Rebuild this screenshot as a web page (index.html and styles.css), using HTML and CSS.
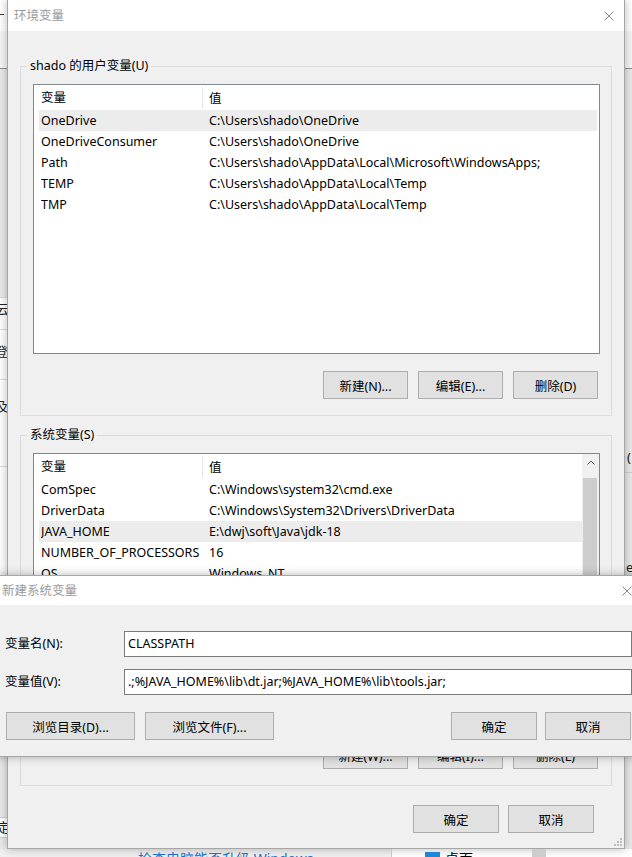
FILE: index.html
```html
<!DOCTYPE html>
<html lang="zh-CN">
<head>
<meta charset="utf-8">
<title>环境变量</title>
<link rel="stylesheet" href="styles.css">
</head>
<body>
<div class="desk">
  <div class="d-top"><span class="d-dash"></span></div>
  <div class="d-band"></div>
  <div class="d-left-white">
    <span class="d-ch c-yun">云</span>
    <span class="d-ch c-deng">登</span>
    <span class="d-ch c-ji">及</span>
    <span class="d-line l1"></span>
    <span class="d-line l2"></span>
    <span class="d-line l3"></span>
  </div>
  <div class="d-right">
    <span class="d-ch r-par">(</span>
    <span class="d-line r1"></span>
    <span class="d-ch r-e">e</span>
  </div>
  <div class="d-left-low"><span class="d-ch c-ding">定</span></div>
  <div class="d-bottom">
    <span class="d-link">检查电脑能否升级 Windows</span>
    <span class="d-tick t1"></span>
    <span class="d-tick t2"></span>
    <span class="d-icon"></span>
    <span class="d-desk">桌面</span>
    <span class="d-sb"></span>
  </div>
</div>

<div class="win main">
  <div class="titlebar">
    <span class="title">环境变量</span>
    <svg class="close" width="10" height="10" viewBox="0 0 10 10"><path d="M0.5 0.5L9.5 9.5M9.5 0.5L0.5 9.5" stroke="#8a8a8a" stroke-width="1" fill="none"/></svg>
  </div>
  <div class="mbody">
    <fieldset class="group">
      <legend>shado 的用户变量(U)</legend>
      <div class="list">
        <div class="lmain">
          <div class="lhead"><span class="c1">变量</span><span class="c2">值</span></div>
          <div class="row sel"><span class="c1">OneDrive</span><span class="c2">C:\Users\shado\OneDrive</span></div>
          <div class="row"><span class="c1">OneDriveConsumer</span><span class="c2">C:\Users\shado\OneDrive</span></div>
          <div class="row"><span class="c1">Path</span><span class="c2">C:\Users\shado\AppData\Local\Microsoft\WindowsApps;</span></div>
          <div class="row"><span class="c1">TEMP</span><span class="c2">C:\Users\shado\AppData\Local\Temp</span></div>
          <div class="row"><span class="c1">TMP</span><span class="c2">C:\Users\shado\AppData\Local\Temp</span></div>
        </div>
      </div>
      <div class="btns">
        <button>新建(N)...</button>
        <button>编辑(E)...</button>
        <button>删除(D)</button>
      </div>
    </fieldset>

    <fieldset class="group g2">
      <legend>系统变量(S)</legend>
      <div class="list list2">
        <div class="lmain">
          <div class="lhead"><span class="c1">变量</span><span class="c2">值</span></div>
          <div class="row"><span class="c1">ComSpec</span><span class="c2">C:\Windows\system32\cmd.exe</span></div>
          <div class="row"><span class="c1">DriverData</span><span class="c2">C:\Windows\System32\Drivers\DriverData</span></div>
          <div class="row sel"><span class="c1">JAVA_HOME</span><span class="c2">E:\dwj\soft\Java\jdk-18</span></div>
          <div class="row"><span class="c1">NUMBER_OF_PROCESSORS</span><span class="c2">16</span></div>
          <div class="row"><span class="c1">OS</span><span class="c2">Windows_NT</span></div>
        </div>
        <div class="vscroll">
          <div class="vs-up"><svg width="8" height="5" viewBox="0 0 8 5"><path d="M0.5 4.5L4 1L7.5 4.5" stroke="#606060" fill="none" stroke-width="1"/></svg></div>
          <div class="vs-thumb"></div>
        </div>
      </div>
      <div class="btns">
        <button>新建(W)...</button>
        <button>编辑(I)...</button>
        <button>删除(L)</button>
      </div>
    </fieldset>

    <div class="btns mbtns">
      <button>确定</button>
      <button>取消</button>
    </div>
  </div>
  <svg class="grip" width="8" height="8" viewBox="0 0 8 8">
    <rect x="6" y="0" width="2" height="2" fill="#bdbdbd"/>
    <rect x="3" y="3" width="2" height="2" fill="#bdbdbd"/>
    <rect x="6" y="3" width="2" height="2" fill="#bdbdbd"/>
    <rect x="0" y="6" width="2" height="2" fill="#bdbdbd"/>
    <rect x="3" y="6" width="2" height="2" fill="#bdbdbd"/>
    <rect x="6" y="6" width="2" height="2" fill="#bdbdbd"/>
  </svg>
</div>

<div class="win dlg">
  <div class="titlebar dtitle">
    <span class="title">新建系统变量</span>
    <svg class="close" width="10" height="10" viewBox="0 0 10 10"><path d="M0.5 0.5L9.5 9.5M9.5 0.5L0.5 9.5" stroke="#8a8a8a" stroke-width="1" fill="none"/></svg>
  </div>
  <div class="dbody">
    <div class="frow"><span class="flabel">变量名(N):</span><div class="finput">CLASSPATH</div></div>
    <div class="frow"><span class="flabel">变量值(V):</span><div class="finput">.;%JAVA_HOME%\lib\dt.jar;%JAVA_HOME%\lib\tools.jar;</div></div>
    <div class="dbtns">
      <div class="dleft">
        <button class="wide">浏览目录(D)...</button>
        <button class="wide">浏览文件(F)...</button>
      </div>
      <div class="dright">
        <button>确定</button>
        <button>取消</button>
      </div>
    </div>
  </div>
</div>
</body>
</html>
```

FILE: styles.css
```css
* { box-sizing: border-box; }
html, body { margin: 0; padding: 0; }
body {
  width: 632px;
  height: 857px;
  overflow: hidden;
  position: relative;
  background: #e9e9e9;
  font-family: "Noto Sans", "Noto Sans CJK SC", sans-serif;
  font-size: 12.5px;
  color: #000;
}

/* ---------- background window pieces ---------- */
.desk { position: absolute; inset: 0; }
.d-top { position: absolute; left: 0; top: 0; width: 632px; height: 31px; background: #fff; }
.d-dash { position: absolute; left: 0; top: 14px; width: 4px; height: 1px; background: #333; }
.d-band { position: absolute; left: 0; top: 31px; width: 632px; height: 38px; background: #f6f6f6; border-bottom: 1px solid #8d8d8d; }
.d-left-white { position: absolute; left: 0; top: 297px; width: 8px; height: 278px; background: #fff; border-top: 1px solid #d6d6d6; }
.d-ch { position: absolute; font-size: 13px; line-height: 16px; color: #222; }
.c-yun { left: -4px; top: 3px; }
.c-deng { left: -5px; top: 45px; }
.c-ji { left: -5px; top: 100px; }
.d-line { position: absolute; left: 0; width: 8px; height: 1px; background: #d9d9d9; }
.l1 { top: 31px; }
.l2 { top: 81px; }
.l3 { top: 168px; }
.d-right { position: absolute; left: 625px; top: 440px; width: 7px; height: 135px; }
.r-par { left: 2px; top: 9px; }
.r1 { top: 32px; background: #cfcfcf; }
.r-e { left: 1px; top: 119px; }
.d-left-low { position: absolute; left: 0; top: 817px; width: 8px; height: 21px; background: #fff; border-top: 1px solid #cfcfcf; border-bottom: 1px solid #cfcfcf; }
.c-ding { left: -3px; top: 1px; }
.d-bottom { position: absolute; left: 0; top: 849px; width: 632px; height: 8px; background: #f0f0f0; overflow: hidden; }
.d-bottom::after { content: ""; position: absolute; left: 391px; top: 0; width: 241px; height: 8px; background: #fff; }
.d-link { position: absolute; left: 138px; top: 1px; font-size: 14px; line-height: 18px; color: #1a6fc9; z-index: 1; }
.d-tick { position: absolute; top: 0; width: 1px; height: 8px; background: #c8c8c8; z-index: 1; }
.t1 { left: 240px; }
.t2 { left: 391px; }
.d-icon { position: absolute; left: 425px; top: 3px; width: 15px; height: 12px; background: #1e87d8; z-index: 1; }
.d-desk { position: absolute; left: 445px; top: 1px; font-size: 14px; line-height: 18px; z-index: 1; }
.d-sb { position: absolute; left: 532px; top: 0; width: 14px; height: 8px; background: #cdcdcd; z-index: 1; }

/* ---------- windows ---------- */
.win {
  position: absolute;
  background: #f0f0f0;
  border: 1px solid #a6a6a6;
  box-shadow: 0 0 9px rgba(0, 0, 0, 0.28);
  display: flex;
  flex-direction: column;
}
.main { left: 7px; top: -1px; width: 618px; height: 850px; }
.titlebar {
  flex: none;
  height: 31px;
  background: #fff;
  display: flex;
  align-items: center;
  justify-content: space-between;
  padding: 0 10px 0 6px;
}
.title { color: #9a9a9a; line-height: 16px; }
.close { display: block; }

.mbody {
  flex: 1;
  display: flex;
  flex-direction: column;
  padding: 26px 12px 0 12px;
}
.group {
  margin: 0;
  min-width: 0;
  border: 1px solid #dcdcdc;
  padding: 9px 11px 16px 12px;
}
.group legend {
  padding: 0 3px;
  margin-left: -6px;
  line-height: 18px;
}
.g2 { margin-top: 10px; }

.list {
  background: #fff;
  border: 1px solid #828790;
  height: 270px;
  display: flex;
  overflow: hidden;
}
.list2 { height: 271px; }
.lmain { flex: 1; min-width: 0; padding-right: 2px; }
.list2 .lmain { padding-right: 0; }
.lhead {
  display: flex;
  height: 25px;
  align-items: center;
}
.lhead .c1 {
  width: 169px;
  padding-left: 7px;
  height: 22px;
  line-height: 22px;
  border-right: 1px solid #e5e5e5;
}
.lhead .c2 { padding-left: 6px; }
.row {
  display: flex;
  align-items: center;
  height: 21px;
  margin-left: 5px;
  padding-left: 2px;
  white-space: nowrap;
}
.row .c1 { width: 162px; flex: none; overflow: hidden; }
.row .c2 { padding-left: 6px; }
.sel { background: #ececec; }

.vscroll {
  flex: none;
  width: 17px;
  background: #f0f0f0;
  display: flex;
  flex-direction: column;
}
.vs-up { height: 24px; display: flex; align-items: center; justify-content: center; padding-bottom: 8px; }
.vs-up svg { display: block; }
.vs-thumb { flex: 1; margin: 0 2px 0 1px; background: #cdcdcd; }

.btns {
  display: flex;
  justify-content: flex-end;
  gap: 10px;
  margin-top: 17px;
  padding-right: 2px;
}
button {
  width: 85px;
  height: 28px;
  border: 1px solid #adadad;
  background: #e1e1e1;
  font: inherit;
  color: #000;
  padding: 0;
  margin: 0;
}
.mbtns { margin-top: 19px; gap: 9px; padding-right: 18px; }
.mbtns button { width: 86px; }

.grip { position: absolute; right: 2px; bottom: 2px; }

/* ---------- new variable dialog ---------- */
.dlg { left: -6px; top: 575px; width: 648px; height: 182px; }
.dtitle { height: 29px; padding: 0 9px 0 7px; }
.dbody { flex: 1; padding: 26px 9px 0 10px; }
.frow { display: flex; align-items: center; height: 26px; }
.frow + .frow { margin-top: 12px; }
.flabel { width: 119px; flex: none; line-height: 18px; }
.finput {
  flex: 1;
  height: 26px;
  line-height: 24px;
  background: #fff;
  border: 1px solid #7a7a7a;
  padding-left: 3px;
  white-space: nowrap;
}
.dbtns {
  display: flex;
  justify-content: space-between;
  margin-top: 17px;
  padding-left: 1px;
}
.dleft, .dright { display: flex; }
.dleft { gap: 10px; }
.dright { gap: 8px; padding-right: 1px; }
.dright button { width: 86px; }
button.wide { width: 129px; }
```
